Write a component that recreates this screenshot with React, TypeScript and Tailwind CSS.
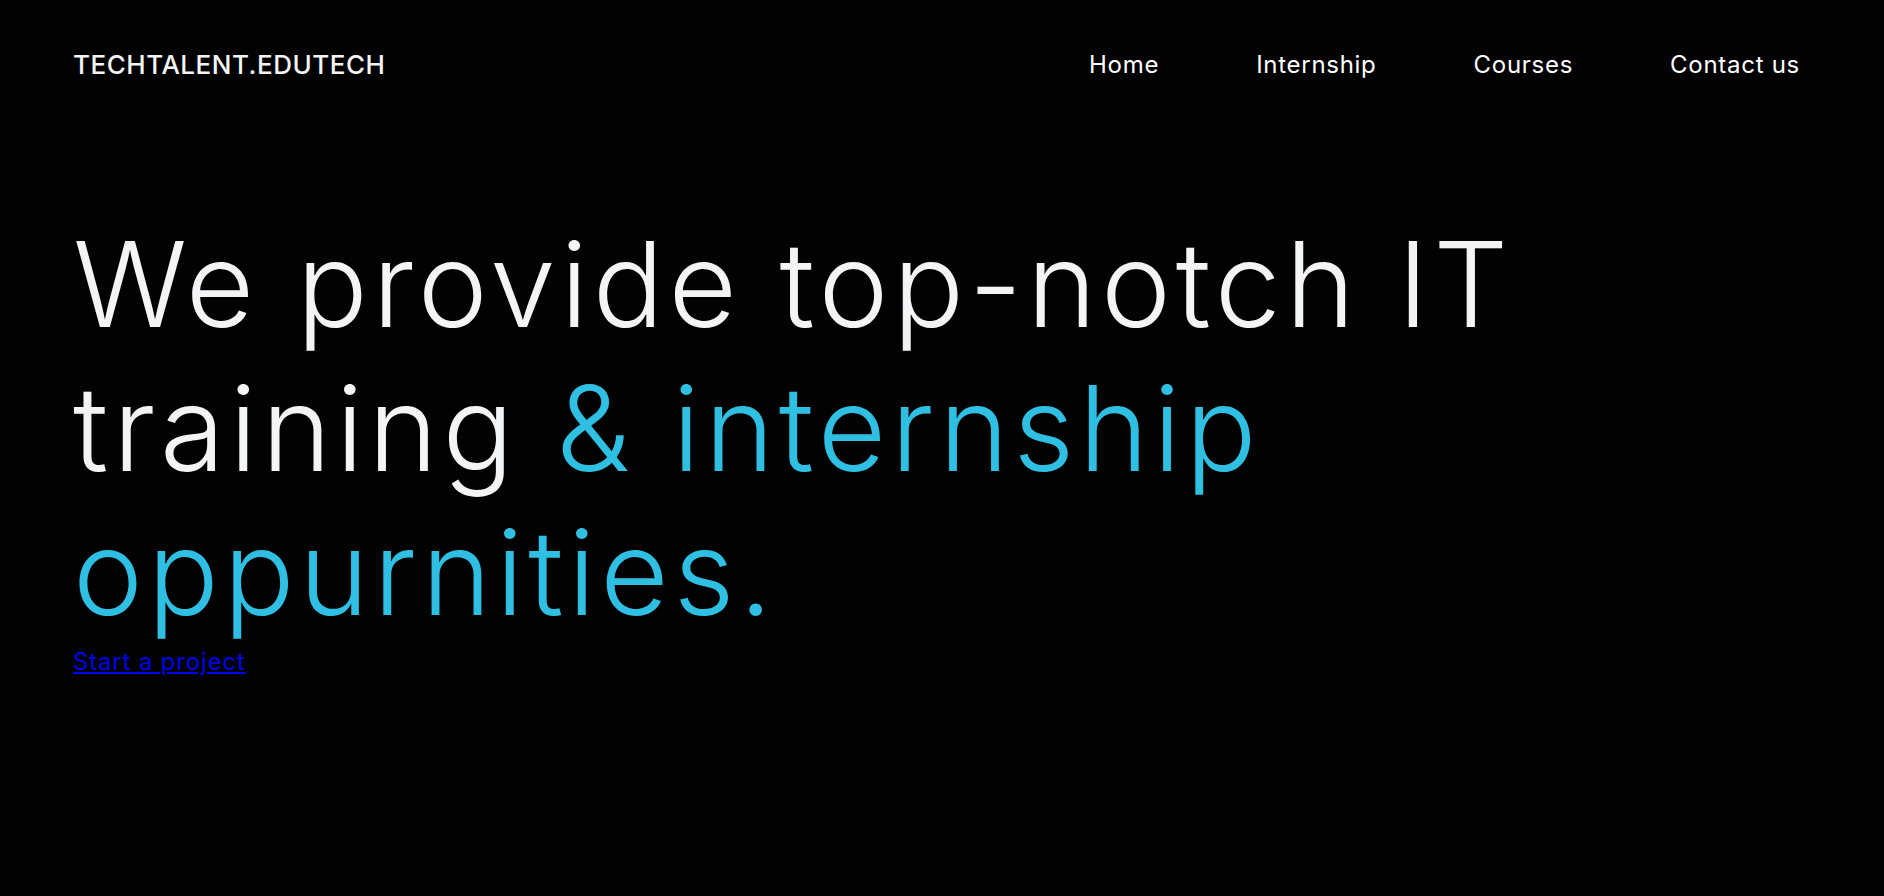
export default function App() {
  const font = { fontFamily: "Inter, 'Noto Sans', sans-serif" };

  return (
    <div className="min-h-screen w-full bg-[#020202] text-[#f3f4f6]" style={font}>
      <header className="flex h-[130px] items-center justify-between pl-[73px] pr-[84px]">
        <a href="#" className="text-[26px] leading-none font-medium tracking-[0.02em] text-[#f3f4f6]">
          TECHTALENT.EDUTECH
        </a>
        <nav className="flex items-center gap-[97px] text-[24px] leading-none tracking-[0.03em]">
          <a href="#" className="text-white">Home</a>
          <a href="#" className="text-white">Internship</a>
          <a href="#" className="text-white">Courses</a>
          <a href="#" className="text-white">Contact us</a>
        </nav>
      </header>

      <section className="px-[73px] pt-[82px]">
        <h1 className="max-w-[1640px] text-[118px] leading-[144px] font-light tracking-[0.04em]">
          We provide top-notch IT training{" "}
          <span className="text-[#2fbfe3]">&amp; internship oppurnities.</span>
        </h1>
        <a href="#" className="text-[24px] leading-[36px] tracking-[0.035em] text-[#0000ee] underline">
          Start a project
        </a>
      </section>
    </div>
  );
}
